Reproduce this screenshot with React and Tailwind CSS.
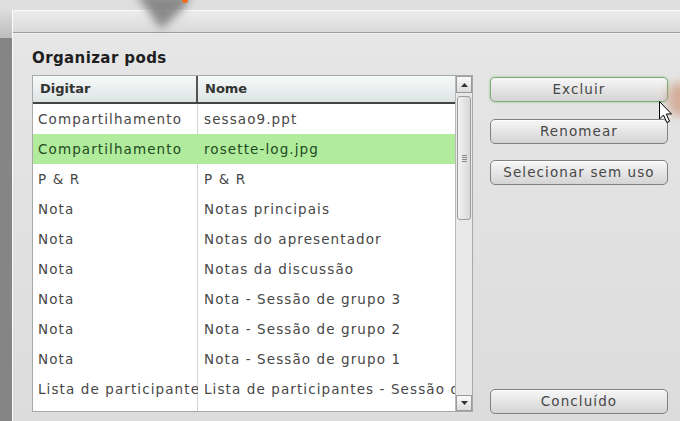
import { useState } from 'react';

const pods = [
  { type: 'Compartilhamento', name: 'sessao9.ppt' },
  { type: 'Compartilhamento', name: 'rosette-log.jpg' },
  { type: 'P & R', name: 'P & R' },
  { type: 'Nota', name: 'Notas principais' },
  { type: 'Nota', name: 'Notas do apresentador' },
  { type: 'Nota', name: 'Notas da discussão' },
  { type: 'Nota', name: 'Nota - Sessão de grupo 3' },
  { type: 'Nota', name: 'Nota - Sessão de grupo 2' },
  { type: 'Nota', name: 'Nota - Sessão de grupo 1' },
  { type: 'Lista de participantes', name: 'Lista de participantes - Sessão de grupo 1' },
];

function PodButton({ children, active }) {
  return (
    <button
      className={
        'h-[25px] w-full rounded-[5px] border bg-gradient-to-b from-[#f7f7f7] to-[#d4d4d4] text-[13.5px] tracking-[1.1px] text-[#474747] ' +
        (active
          ? 'border-[#7eaa7a] shadow-[0_0_3px_rgba(110,190,100,0.7)]'
          : 'border-[#808080] shadow-[inset_0_1px_0_#fff]')
      }
    >
      {children}
    </button>
  );
}

function Scrollbar() {
  return (
    <div className="flex w-[17px] flex-col border-l border-[#b9b9b9] bg-[#e9e9e9]">
      <div className="flex h-[17px] items-center justify-center border border-[#9a9a9a] bg-gradient-to-b from-[#fafafa] to-[#dcdcdc]">
        <svg width="7" height="4" viewBox="0 0 7 4"><path d="M0 4 L3.5 0 L7 4Z" fill="#333" /></svg>
      </div>
      <div className="flex-1 px-[1px] pt-[3px]">
        <div className="flex h-[124px] flex-col items-center justify-center rounded-[3px] border border-[#9c9c9c] bg-gradient-to-r from-[#f2f2f2] to-[#d8d8d8]">
          <div className="flex flex-col gap-[1px]">
            <span className="block h-[1px] w-[5px] bg-[#8a8a8a]" />
            <span className="block h-[1px] w-[5px] bg-[#8a8a8a]" />
            <span className="block h-[1px] w-[5px] bg-[#8a8a8a]" />
            <span className="block h-[1px] w-[5px] bg-[#8a8a8a]" />
          </div>
        </div>
      </div>
      <div className="flex h-[16px] items-center justify-center border border-[#9a9a9a] bg-gradient-to-b from-[#fafafa] to-[#dcdcdc]">
        <svg width="7" height="4" viewBox="0 0 7 4"><path d="M0 0 L3.5 4 L7 0Z" fill="#333" /></svg>
      </div>
    </div>
  );
}

export default function App() {
  const [selected] = useState(1);

  return (
    <div
      className="relative flex h-[421px] w-[680px] flex-col overflow-hidden bg-[#dedede]"
      style={{ fontFamily: '"DejaVu Sans", Verdana, sans-serif' }}
    >
      {/* pointer shadow and marker above the dialog */}
      <svg className="absolute left-[128px] top-[-10px] blur-[4px]" width="76" height="48" viewBox="0 0 76 48">
        <path d="M8 4 L64 4 L56 18 L33 39 L18 18Z" fill="#7a7a7a" opacity="0.85" />
      </svg>
      <div className="absolute left-[182px] top-[-3px] h-[6px] w-[6px] rounded-full bg-[#f26a1b]" />

      <div className="h-[10px] shrink-0" />

      <div className="flex flex-1">
        {/* window behind */}
        <div className="flex w-[12px] flex-col">
          <div className="h-[28px] bg-gradient-to-b from-[#dcdcdc] to-[#bdbdbd]" />
          <div className="flex-1 bg-[#858585]" />
        </div>

        {/* dialog */}
        <div className="flex flex-1 flex-col border-l border-t border-[#fbfbfb] bg-[#e2e2e2]">
          <div className="h-[22px] border-b border-[#9c9c9c] bg-gradient-to-b from-[#ececec] to-[#dadada]" />
          <div className="flex flex-1 border-t border-[#f2f2f2] bg-gradient-to-b from-[#e6e6e6] to-[#dcdcdc] pl-[19px] pr-[12px]">
            <div className="flex flex-col">
              <h2 className="mt-[15px] text-[15px] font-bold leading-[18px] tracking-[0.4px] text-[#1e1e1e]">
                Organizar pods
              </h2>
              <div className="mt-[8px] flex h-[337px] w-[441px] border border-[#a9a9a9] bg-white">
                <div className="flex flex-1 flex-col overflow-hidden">
                  <div className="flex h-[28px] shrink-0 border-b-2 border-[#444] bg-gradient-to-b from-[#f6f9f9] to-[#dde5e4] text-[13px] font-bold text-[#333]">
                    <div className="flex w-[165px] items-center border-r-2 border-[#555] pl-[7px]">Digitar</div>
                    <div className="flex flex-1 items-center pl-[7px]">Nome</div>
                  </div>
                  <div className="relative flex-1 overflow-hidden">
                    <div className="absolute bottom-0 left-[164px] top-0 w-px bg-[#d4d4d4]" />
                    {pods.map((p, i) => (
                      <div
                        key={i}
                        className={
                          'relative flex h-[30px] items-center whitespace-nowrap text-[13.5px] tracking-[1.1px] ' +
                          (i === selected ? 'bg-[#b0ec9c] text-[#234a23]' : 'text-[#474747]')
                        }
                      >
                        <div className="w-[165px] overflow-hidden pl-[5px]">{p.type}</div>
                        <div className="flex-1 overflow-hidden pl-[6px]">{p.name}</div>
                      </div>
                    ))}
                  </div>
                </div>
                <Scrollbar />
              </div>
            </div>

            <div className="ml-[17px] flex flex-1 flex-col pt-[43px] pb-[7px]">
              <PodButton active>Excluir</PodButton>
              <div className="mt-[17px] flex flex-col gap-[16px]">
                <PodButton>Renomear</PodButton>
                <PodButton>Selecionar sem uso</PodButton>
              </div>
              <div className="flex-1" />
              <PodButton>Concluído</PodButton>
            </div>
          </div>
        </div>
      </div>

      {/* glow behind the cursor */}
      <div className="absolute left-[668px] top-[82px] h-[34px] w-[24px] rounded-full bg-[#c98a6a] opacity-60 blur-[5px]" />
      {/* mouse cursor */}
      <svg className="absolute left-[659px] top-[101px]" width="16" height="26" viewBox="0 0 16 26">
        <path d="M0.5 0.5 L0.5 18 L4.5 14 L7.8 21.5 L10.5 20.3 L7.3 13 L12.5 13Z" fill="#fff" stroke="#000" strokeWidth="1" strokeLinejoin="round" />
      </svg>
    </div>
  );
}
